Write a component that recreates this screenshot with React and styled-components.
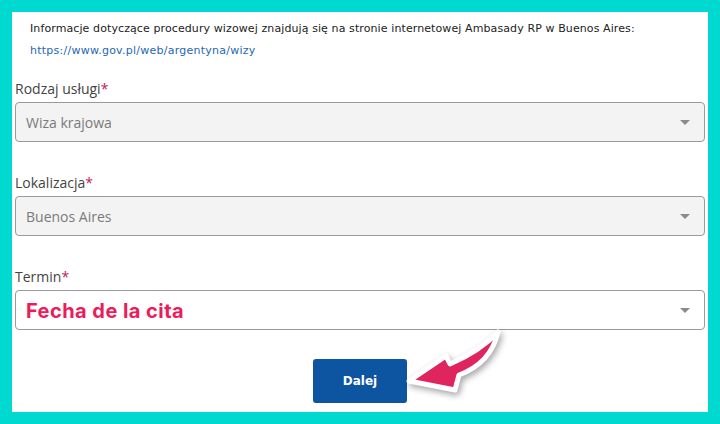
import React from "react";
import styled, { createGlobalStyle } from "styled-components";

const Global = createGlobalStyle`
  html, body { margin: 0; padding: 0; }
  body { background: #00d9cf; width: 720px; height: 424px; overflow: hidden; }
`;

const Panel = styled.div`
  position: relative;
  margin: 12px;
  height: 400px;
  background: #ffffff;
  padding: 6px 3px 0;
  box-sizing: border-box;
`;

const Info = styled.div`
  padding: 0 15px;
  font-family: "DejaVu Sans", Verdana, sans-serif;
  font-size: 11px;
  line-height: 22px;
  letter-spacing: 0.1px;
  color: #222;
`;

const Link = styled.a`
  color: #2468b8;
  text-decoration: none;
  letter-spacing: 0.25px;
`;

const Fields = styled.div`
  display: flex;
  flex-direction: column;
  gap: 31px;
  margin-top: 17px;
`;

const Field = styled.div`
  display: flex;
  flex-direction: column;
  gap: 3px;
`;

const Label = styled.label`
  font-family: "Open Sans", sans-serif;
  font-size: 14px;
  line-height: 20px;
  color: #444;
`;

const Star = styled.span`
  color: #c2185b;
`;

const Select = styled.div`
  height: 40px;
  box-sizing: border-box;
  border: 1px solid #9a9a9a;
  border-radius: 4px;
  background: ${(p) => (p.$disabled ? "#f3f3f3" : "#ffffff")};
  display: flex;
  align-items: center;
  justify-content: space-between;
  padding: 0 14px 0 10px;
`;

const Value = styled.span`
  font-family: "Open Sans", sans-serif;
  font-size: 14px;
  color: #7a7a7a;
`;

const Highlight = styled.span`
  font-family: Inter, "Noto Sans", sans-serif;
  font-weight: 700;
  font-size: 20px;
  color: #ec1c5b;
  letter-spacing: 0.45px;
  margin-top: 2px;
`;

const Caret = styled.span`
  width: 0;
  height: 0;
  border-left: 5px solid transparent;
  border-right: 5px solid transparent;
  border-top: 5px solid #8a8a8a;
`;

const Actions = styled.div`
  display: flex;
  justify-content: center;
  margin-top: 29px;
`;

const Button = styled.button`
  width: 94px;
  height: 44px;
  border: none;
  border-radius: 3px;
  background: #0e55a1;
  color: #fff;
  font-family: "DejaVu Sans", Verdana, sans-serif;
  font-weight: 700;
  font-size: 12px;
`;

const Arrow = styled.svg`
  position: absolute;
  left: 386px;
  top: 310px;
  overflow: visible;
  filter: drop-shadow(2px 3px 3px rgba(0, 0, 0, 0.35));
`;

const fields = [
  { label: "Rodzaj usługi", value: "Wiza krajowa", disabled: true },
  { label: "Lokalizacja", value: "Buenos Aires", disabled: true },
  { label: "Termin", value: "Fecha de la cita", highlight: true },
];

export default function App() {
  return (
    <>
      <Global />
      <Panel>
        <Info>
          <div>
            Informacje dotyczące procedury wizowej znajdują się na stronie
            internetowej Ambasady RP w Buenos Aires:
          </div>
          <div>
            <Link href="#">https://www.gov.pl/web/argentyna/wizy</Link>
          </div>
        </Info>
        <Fields>
          {fields.map((f) => (
            <Field key={f.label}>
              <Label>
                {f.label}
                <Star>*</Star>
              </Label>
              <Select $disabled={f.disabled}>
                {f.highlight ? (
                  <Highlight>{f.value}</Highlight>
                ) : (
                  <Value>{f.value}</Value>
                )}
                <Caret />
              </Select>
            </Field>
          ))}
        </Fields>
        <Actions>
          <Button>Dalej</Button>
        </Actions>
        <Arrow width="110" height="75" viewBox="0 0 110 75">
          <path
            d="M11 59 L48 34 L52 42 Q82 29 100 10 Q93 41 61 53 L57 68 Z"
            fill="#e0245e"
            stroke="#ffffff"
            strokeWidth="5"
            strokeLinejoin="round"
          />
        </Arrow>
      </Panel>
    </>
  );
}
